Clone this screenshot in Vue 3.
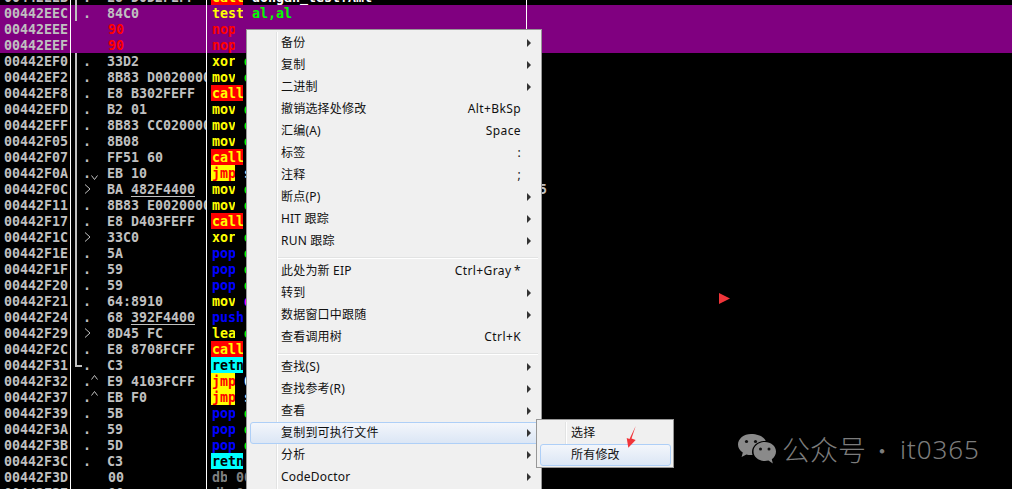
<script setup>
const rows = [
  { a: '00442EEB', m: '.', b: 'E8 D0D2FEFF', op: 'call', k: 'call', t: ' dongan_test?Aml', tc: 'white', g: 'line' },
  { a: '00442EEC', m: '.', b: '84C0', op: 'test', k: 'plain', t: ' al,al', tc: 'green', g: 'end', sel: true },
  { a: '00442EEE', m: '', b: '90', op: 'nop', k: 'nop', t: '', sel: true, red: true },
  { a: '00442EEF', m: '', b: '90', op: 'nop', k: 'nop', t: '', sel: true, red: true },
  { a: '00442EF0', m: '.', b: '33D2', op: 'xor', k: 'plain', t: ' edx,edx', tc: 'green', g: 'line' },
  { a: '00442EF2', m: '.', b: '8B83 D0020000', op: 'mov', k: 'plain', t: ' eax,dword ptr', tc: 'green', g: 'line' },
  { a: '00442EF8', m: '.', b: 'E8 B302FEFF', op: 'call', k: 'call', t: ' 004231B0', tc: 'white', g: 'line' },
  { a: '00442EFD', m: '.', b: 'B2 01', op: 'mov', k: 'plain', t: ' dl,1', tc: 'green', g: 'line' },
  { a: '00442EFF', m: '.', b: '8B83 CC020000', op: 'mov', k: 'plain', t: ' eax,dword ptr', tc: 'green', g: 'line' },
  { a: '00442F05', m: '.', b: '8B08', op: 'mov', k: 'plain', t: ' ecx,dword ptr', tc: 'green', g: 'line' },
  { a: '00442F07', m: '.', b: 'FF51 60', op: 'call', k: 'call', t: ' dword ptr', tc: 'white', g: 'line' },
  { a: '00442F0A', m: '.', j: 'down', b: 'EB 10', op: 'jmp', k: 'jmp', t: ' short 00442F1C', tc: 'white', g: 'line' },
  { a: '00442F0C', j: 'in', b: 'BA 482F4400', u: true, op: 'mov', k: 'plain', t: ' edx,00442F48', tc: 'green', g: 'line', tail: '5' },
  { a: '00442F11', m: '.', b: '8B83 E0020000', op: 'mov', k: 'plain', t: ' eax,dword ptr', tc: 'green', g: 'line' },
  { a: '00442F17', m: '.', b: 'E8 D403FEFF', op: 'call', k: 'call', t: ' 004232F0', tc: 'white', g: 'line' },
  { a: '00442F1C', j: 'in', b: '33C0', op: 'xor', k: 'plain', t: ' eax,eax', tc: 'green', g: 'line' },
  { a: '00442F1E', m: '.', b: '5A', op: 'pop', k: 'pop', t: ' edx', tc: 'green', g: 'line' },
  { a: '00442F1F', m: '.', b: '59', op: 'pop', k: 'pop', t: ' ecx', tc: 'green', g: 'line' },
  { a: '00442F20', m: '.', b: '59', op: 'pop', k: 'pop', t: ' ecx', tc: 'green', g: 'line' },
  { a: '00442F21', m: '.', b: '64:8910', op: 'mov', k: 'plain', t: ' dword ptr fs:', tc: 'magenta', g: 'line' },
  { a: '00442F24', m: '.', b: '68 392F4400', u: true, op: 'push', k: 'pop', t: ' 00442F39', tc: 'white', g: 'line' },
  { a: '00442F29', j: 'in', b: '8D45 FC', op: 'lea', k: 'plain', t: ' eax,dword ptr', tc: 'green', g: 'line' },
  { a: '00442F2C', m: '.', b: 'E8 8708FCFF', op: 'call', k: 'call', t: ' 00403738', tc: 'white', g: 'line' },
  { a: '00442F31', m: '.', b: 'C3', op: 'retn', k: 'retn', t: '', g: 'corner' },
  { a: '00442F32', m: '.', j: 'up', b: 'E9 4103FCFF', op: 'jmp', k: 'jmp', t: ' 00403278', tc: 'white' },
  { a: '00442F37', m: '.', j: 'up', b: 'EB F0', op: 'jmp', k: 'jmp', t: ' short 00442F29', tc: 'white' },
  { a: '00442F39', m: '.', b: '5B', op: 'pop', k: 'pop', t: ' ebx', tc: 'green' },
  { a: '00442F3A', m: '.', b: '59', op: 'pop', k: 'pop', t: ' ecx', tc: 'green' },
  { a: '00442F3B', m: '.', b: '5D', op: 'pop', k: 'pop', t: ' ebp', tc: 'green' },
  { a: '00442F3C', m: '.', b: 'C3', op: 'retn', k: 'retn', t: '' },
  { a: '00442F3D', b: '00', data: true, op: 'db', k: 'db', t: ' 00', tc: 'grey' },
  { a: '00442F3E', b: '00', data: true, op: 'db', k: 'db', t: ' 00', tc: 'grey' },
]
const menu = [
  [{ l: '备份', s: 1 }, { l: '复制', s: 1 }, { l: '二进制', s: 1 }, { l: '撤销选择处修改', h: 'Alt+BkSp' }, { l: '汇编(A)', h: 'Space' }, { l: '标签', h: ':' }, { l: '注释', h: ';' }, { l: '断点(P)', s: 1 }, { l: 'HIT 跟踪', s: 1 }, { l: 'RUN 跟踪', s: 1 }],
  [{ l: '此处为新 EIP', h: 'Ctrl+Gray *' }, { l: '转到', s: 1 }, { l: '数据窗口中跟随', s: 1 }, { l: '查看调用树', h: 'Ctrl+K' }],
  [{ l: '查找(S)', s: 1 }, { l: '查找参考(R)', s: 1 }, { l: '查看', s: 1 }, { l: '复制到可执行文件', s: 1, on: 1 }, { l: '分析', s: 1 }, { l: 'CodeDoctor', s: 1 }],
]
</script>

<template>
  <div class="screen">
    <div class="listing">
      <div v-for="r in rows" :key="r.a" class="row" :class="{ sel: r.sel }">
        <div class="addr">{{ r.a }}</div>
        <div class="bytes">
          <span class="gutter" :class="r.g"></span>
          <span v-if="r.m" class="mark">{{ r.m }}</span>
          <svg v-if="r.j === 'in'" class="jump jump-in" width="7" height="10" viewBox="0 0 7 10"><path d="M1 .5 L6 5 L1 9.500" fill="none" stroke="#c0c0c0"/></svg>
          <svg v-if="r.j === 'up'" class="jump jump-up" width="7" height="5" viewBox="0 0 7 5"><path d="M.5 4.500 L3.500 .5 L6.500 4.500" fill="none" stroke="#c0c0c0"/></svg>
          <svg v-if="r.j === 'down'" class="jump jump-down" width="7" height="5" viewBox="0 0 7 5"><path d="M.5 .5 L3.500 4.500 L6.500 .5" fill="none" stroke="#c0c0c0"/></svg>
          <span class="hex" :class="{ red: r.red, data: r.red || r.data }">{{ r.b }}</span>
          <span v-if="r.u" class="ul"></span>
        </div>
        <div class="dis">
          <span class="op" :class="r.k" :style="{ width: r.op.length * 8 + 'px' }">{{ r.op }}</span><span class="args" :class="r.tc">{{ r.t }}</span>
          <span v-if="r.tail" class="tail">{{ r.tail }}</span>
        </div>
      </div>
    </div>

    <div class="menu main-menu">
      <div class="rail"></div>
      <template v-for="(group, i) in menu" :key="i">
        <div v-if="i" class="sep"></div>
        <div v-for="it in group" :key="it.l" class="item" :class="{ on: it.on }">
          <span class="label">{{ it.l }}</span>
          <span v-if="it.h" class="hot">{{ it.h }}</span>
          <span v-if="it.s" class="arrow"></span>
        </div>
      </template>
    </div>

    <div class="menu sub-menu">
      <div class="rail"></div>
      <div class="item"><span class="label">选择</span></div>
      <div class="item on"><span class="label">所有修改</span></div>
    </div>

    <svg class="pen" width="14" height="24" viewBox="0 0 14 24"><path d="M10.700 1 L6.500 13.500 L10.700 15 L3.300 22.700 L1.700 13 L4.500 14 Z" fill="#f0353a"/></svg>
    <svg class="tri" width="11" height="11" viewBox="0 0 11 11"><path d="M0 0 L11 5.500 L0 11 Z" fill="#f0353a"/></svg>

    <div class="mark-wm">
      <svg width="40" height="32" viewBox="0 0 40 32">
        <path d="M14 1C6.800 1 1 5.700 1 11.500c0 3.300 1.900 6.200 4.800 8.100L4.600 24l4.800-2.600c1.400.4 3 .7 4.600.7.500 0 1 0 1.500-.1-.3-1-.5-2-.5-3.100 0-6.100 5.700-10.900 12.600-10.900h1.100C27.300 4 21.300 1 14 1z" fill="#8a8a8a"/>
        <path d="M39 18.500C39 13 33.900 9 27.800 9S16.500 13 16.500 18.500 21.700 28 27.800 28c1.300 0 2.500-.2 3.700-.5l4.300 2.900-1-4.200c2.600-1.800 4.200-4.500 4.200-7.700z" fill="#8a8a8a"/>
        <circle cx="9.500" cy="8.500" r="1.600" fill="#111"/><circle cx="18.500" cy="8.500" r="1.600" fill="#111"/>
        <circle cx="23.500" cy="16" r="1.500" fill="#111"/><circle cx="32" cy="16" r="1.500" fill="#111"/>
      </svg>
      <span class="wm-text">公众号</span><span class="wm-dot">·</span><span class="wm-id">it0365</span>
    </div>
  </div>
</template>

<style>
html, body { margin: 0; background: #000; overflow: hidden; }
</style>

<style scoped>
.screen {
  position: relative;
  width: 1012px;
  height: 489px;
  overflow: hidden;
  background: #000;
  font-family: "DejaVu Sans Mono", "Liberation Mono", monospace;
  font-size: 13.3px;
  font-weight: 700;
  color: #c0c0c0;
}
.listing { margin-top: -11px; }
.row {
  display: grid;
  grid-template-columns: 71px 136px 320px;
  height: 16px;
  line-height: 18px;
  white-space: pre;
}
.row.sel { background: #800080; }
.addr { padding-left: 4px; border-right: 1px solid #fff; box-sizing: border-box; height: 16px; overflow: hidden; }
.bytes { position: relative; border-right: 1px solid #fff; overflow: hidden; height: 16px; }
.gutter { position: absolute; left: 4px; top: 0; width: 2px; }
.gutter.line, .gutter.end { height: 16px; background: #c0c0c0; }
.gutter.corner { height: 10px; background: #c0c0c0; }
.gutter.corner::after { content: ""; position: absolute; left: 0; top: 8px; width: 7px; height: 2px; background: #c0c0c0; }
.mark { position: absolute; left: 12px; top: 0; }
.jump { position: absolute; display: block; }
.jump-in { left: 13px; top: 3px; }
.jump-up { left: 20px; top: 2px; }
.jump-down { left: 20px; top: 10px; }
.hex { position: absolute; left: 36px; top: 0; }
.hex.data { left: 37px; }
.ul { position: absolute; left: 60px; top: 15px; width: 64px; height: 1px; background: #c0c0c0; }
.red { color: #ff0000; }
.dis { position: relative; display: flex; align-items: flex-start; padding-left: 4px; border-right: 1px solid #fff; height: 16px; }
.op { display: block; flex: none; box-sizing: border-box; height: 16px; padding-left: 1px; overflow: hidden; }
.args { display: block; height: 16px; overflow: hidden; flex: none; margin-left: 1px; }
.plain { color: #ffff00; }
.call { background: #ff0000; color: #ffff00; }
.jmp { background: #ffff00; color: #ff0000; }
.nop { color: #ff0000; }
.pop { color: #0000ff; }
.retn { background: #00ffff; color: #000; }
.db { color: #808080; }
.white { color: #fff; }
.green { color: #00ff00; }
.magenta { color: #ff00ff; }
.grey { color: #808080; }
.tail { position: absolute; left: 332px; top: 0; }

.menu {
  position: absolute;
  box-sizing: border-box;
  background: #f0f0f0;
  border: 1px solid #979797;
  font-family: "Noto Sans", "Noto Sans CJK SC", sans-serif;
  font-size: 12px;
  font-weight: 400;
  color: #111;
  padding: 2px;
}
.main-menu { left: 246px; top: 29px; width: 296px; height: 480px; }
.sub-menu { left: 536px; top: 419px; width: 138px; height: 49px; }
.rail { position: absolute; top: 2px; bottom: 2px; left: 29px; width: 2px; background: linear-gradient(to right, #e2e3e3 50%, #fff 50%); }
.sub-menu .rail { left: 28px; }
.item {
  position: relative;
  height: 22px;
  line-height: 22px;
  display: flex;
  align-items: center;
  padding-left: 32px;
  padding-right: 18px;
  box-sizing: border-box;
}
.item.on {
  margin-left: 1px;
  border: 1px solid #aecff7;
  border-radius: 3px;
  background: linear-gradient(to bottom, #f3f6fb, #dbe6f5);
  padding-left: 30px;
  padding-right: 17px;
}
.label { letter-spacing: 0.2px; }
.hot { margin-left: auto; letter-spacing: 0.4px; word-spacing: -1px; }
.arrow {
  position: absolute;
  right: 8px;
  top: 7px;
  border-left: 4px solid #333;
  border-top: 4px solid transparent;
  border-bottom: 4px solid transparent;
}
.item.on .arrow { right: 7px; top: 6px; }
.sep { height: 2px; margin: 5px 1px 1px 29px; background: #e2e3e3; border-bottom: 1px solid #fff; box-sizing: border-box; }
.sub-menu .item { padding-left: 32px; }
.sub-menu .item.on { padding-left: 30px; }

.pen { position: absolute; left: 625px; top: 425px; }
.tri { position: absolute; left: 719px; top: 293px; }
.mark-wm {
  position: absolute;
  left: 737px;
  top: 431px;
  display: flex;
  align-items: center;
  height: 36px;
  font-family: "Noto Sans CJK SC", "Noto Sans", sans-serif;
  font-weight: 300;
  color: #7c7c7c;
}
.wm-text { font-size: 28px; margin-left: 5px; }
.wm-dot { font-size: 24px; margin-left: 4px; }
.wm-id { font-family: "Noto Sans", sans-serif; font-size: 26px; margin-left: 6px; letter-spacing: 0.9px; }
</style>
